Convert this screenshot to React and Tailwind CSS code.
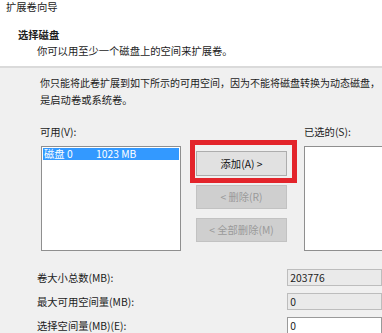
import React from 'react';

const font = { fontFamily: '"Microsoft YaHei", "Noto Sans CJK SC", "Noto Sans", sans-serif' };

const ReadonlyField = ({ value, white }) => (
  <div
    className={
      'w-[100px] h-[17px] border pl-[2px] text-[10.3px] leading-[15px] ' +
      (white ? 'bg-white border-[#9a9a9a]' : 'bg-[#eaeaea] border-[#bdbdbd]')
    }
  >
    {value}
  </div>
);

const App = () => {
  return (
    <div
      className="w-[382px] h-[333px] overflow-hidden bg-[#f0f0f0] text-[#1c1c1c] text-[10.3px]"
      style={font}
    >
      {/* Header */}
      <div className="h-[68px] bg-white border-b-2 border-[#dadada]">
        <div className="pl-[6px] leading-[13px]">扩展卷向导</div>
        <div className="pl-[18px] pt-[15px] font-bold leading-[14px]">选择磁盘</div>
        <div className="pl-[37px] pt-[2px] leading-[14px]">你可以用至少一个磁盘上的空间来扩展卷。</div>
      </div>

      {/* Body */}
      <div className="pl-[40px] pt-[6px]">
        <div className="leading-[17px] whitespace-nowrap text-[10px]">
          你只能将此卷扩展到如下所示的可用空间，因为不能将磁盘转换为动态磁盘，
        </div>
        <div className="leading-[17px]">是启动卷或系统卷。</div>

        <div className="flex mt-[15px]">
          {/* Available list */}
          <div className="w-[141px] shrink-0">
            <div className="leading-[17px]">可用(V):</div>
            <div className="mt-[6px] ml-[1px] h-[105px] bg-white border border-[#8f8f8f] p-[1px]">
              <div className="flex h-[12px] items-center bg-[#3399ff] text-white leading-[12px]">
                <span className="w-[53px] pl-[1px]">磁盘 0</span>
                <span>1023 MB</span>
              </div>
            </div>
          </div>

          {/* Buttons */}
          <div className="ml-[15px] pt-[28px] w-[91px] shrink-0 flex flex-col gap-[9px]">
            <div className="relative">
              <button className="w-[91px] h-[25px] bg-[#e1e1e1] border border-[#adadad] text-[#111] text-[10.3px]">
                添加(A) &gt;
              </button>
              <div className="absolute left-[-6px] top-[-11px] w-[107px] h-[43px] border-[5px] border-[#e3242b] pointer-events-none" />
            </div>
            <button className="w-[91px] h-[24px] bg-[#cfcfcf] border border-[#c2c2c2] text-[#9a9a9a] text-[10.3px]">
              &lt; 删除(R)
            </button>
            <button className="w-[91px] h-[24px] bg-[#cfcfcf] border border-[#c2c2c2] text-[#9a9a9a] text-[10.3px]">
              &lt; 全部删除(M)
            </button>
          </div>

          {/* Selected list */}
          <div className="ml-[17px] w-[100px] shrink-0">
            <div className="leading-[17px]">已选的(S):</div>
            <div className="mt-[6px] h-[105px] bg-white border border-[#8f8f8f]" />
          </div>
        </div>
      </div>

      {/* Size rows */}
      <div className="pl-[37px] mt-[18px] flex flex-col gap-[7px]">
        <div className="flex items-center">
          <span className="w-[265px] leading-[17px]">卷大小总数(MB):</span>
          <ReadonlyField value="203776" />
        </div>
        <div className="flex items-center">
          <span className="w-[265px] leading-[17px]">最大可用空间量(MB):</span>
          <ReadonlyField value="0" />
        </div>
        <div className="flex items-center">
          <span className="w-[265px] leading-[17px]">选择空间量(MB)(E):</span>
          <ReadonlyField value="0" white />
        </div>
      </div>
    </div>
  );
};

export default App;
